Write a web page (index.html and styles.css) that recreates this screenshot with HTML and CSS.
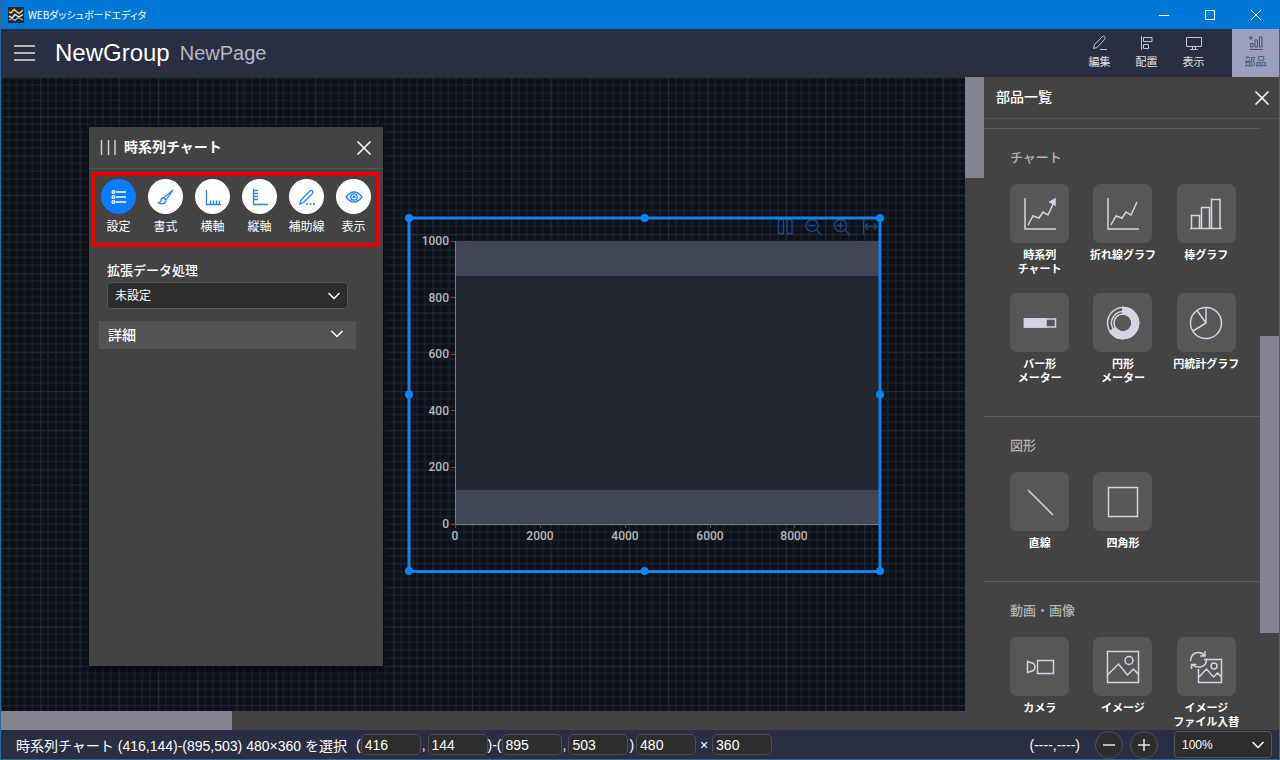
FILE: index.html
```html
<!DOCTYPE html>
<html lang="ja">
<head>
<meta charset="utf-8">
<title>WEBダッシュボードエディタ</title>
<link rel="stylesheet" href="styles.css">
</head>
<body>
<div class="app">
  <div class="titlebar">
    <svg class="app-icon" width="16" height="16" viewBox="0 0 16 16"><rect width="16" height="16" fill="#2b2b2b"/><path d="M1 5 3 6 6 2.500 11 6.500 15 3" fill="none" stroke="#f3d78a" stroke-width="1.400"/><path d="M1 9 4 11 7 7.500 11 10 15 7.500" fill="none" stroke="#f5f0dc" stroke-width="1.400"/><path d="M1 13 4 11.500 7 13.500 10 10.500 15 13" fill="none" stroke="#8ec6d8" stroke-width="1.200"/></svg>
    <span class="titlebar-text">WEBダッシュボードエディタ</span>
    <div class="win-buttons">
      <button class="win-button" aria-label="最小化"><svg width="12" height="12"><path d="M1 6.500h10"/></svg></button>
      <button class="win-button" aria-label="最大化"><svg width="12" height="12"><path d="M1.500 1.500h9v9h-9z"/></svg></button>
      <button class="win-button" aria-label="閉じる"><svg width="12" height="12"><path d="M1 1l10 10M11 1L1 11"/></svg></button>
    </div>
  </div>

  <header class="header">
    <button class="menu-button" aria-label="メニュー"><svg width="22" height="18"><path d="M0 2h21M0 9h21M0 16h21" stroke="#b4b4bc" stroke-width="2"/></svg></button>
    <h1 class="group-name">NewGroup</h1>
    <span class="page-name">NewPage</span>
    <nav class="tools">
      <button class="tool"><svg width="16" height="16" viewBox="0 0 16 16"><path d="M1.500 13.500 2.500 9.500 10.500 1.500Q11.500.700 12.700 1.700 13.800 2.800 13 3.800L5 12.500z M8 14.500h7"/></svg>編集</button>
      <button class="tool"><svg width="16" height="16" viewBox="0 0 16 16"><path d="M2.500 1v14M4.500 2.500h8.500v4H4.500zM4.500 9.500h5v4h-5z"/></svg>配置</button>
      <button class="tool"><svg width="16" height="16" viewBox="0 0 16 16"><path d="M.500 2.500h15v9H.500zM4 14.500h8M6.500 11.500v3M9.500 11.500v3"/></svg>表示</button>
      <button class="tool tool-active"><svg width="16" height="16" viewBox="0 0 16 16"><path d="M1 3h4M3 1v4M2.500 8.500h2.500v3.500H2.500zM7 5h2.500v7H7zM11.500 2H14v10h-2.500zM2 14.500h13"/></svg>部品</button>
    </nav>
  </header>

  <div class="workspace">
    <main class="stage">
      <div class="canvas">
        <svg class="grid" width="100%" height="100%">
          <defs><pattern id="grid" width="40" height="40" patternUnits="userSpaceOnUse" patternTransform="scale(0.981)">
            <path d="M8 0v40M16 0v40M24 0v40M32 0v40M0 8h40M0 16h40M0 24h40M0 32h40" stroke="#1d212a" stroke-width="1.300"/>
            <path d="M0 0v40M0 0h40" stroke="#262a32" stroke-width="2.400"/>
          </pattern></defs>
          <rect width="100%" height="100%" fill="url(#grid)"/>
        </svg>

        <svg class="chart" width="480" height="362" viewBox="404 213 480 362">
          <rect x="455" y="241" width="425" height="283" fill="#23272f"/>
          <rect x="455" y="241" width="425" height="35" fill="#404654"/>
          <rect x="455" y="490" width="425" height="34" fill="#404654"/>
          <path d="M455.500 241v283.500H880" class="axis"/>
          <path d="M451 241.500h4M451 297.500h4M451 354.500h4M451 410.500h4M451 467.500h4M451 524.500h4M455.500 524v4M540.500 524v4M625.500 524v4M710.500 524v4M794.500 524v4" class="tick"/>
          <g class="scale-y"><text x="449" y="245">1000</text><text x="449" y="302">800</text><text x="449" y="358">600</text><text x="449" y="415">400</text><text x="449" y="471">200</text><text x="449" y="528">0</text></g>
          <g class="scale-x"><text x="455" y="540">0</text><text x="540" y="540">2000</text><text x="625" y="540">4000</text><text x="710" y="540">6000</text><text x="794" y="540">8000</text></g>
          <g class="chart-tools">
            <path d="M778.500 219.500h5v14h-5zM787 219.500h5v14h-5z"/>
            <circle cx="812" cy="225.500" r="6"/><path d="M808.500 225.500h7M816.500 230l5 5"/>
            <circle cx="840.500" cy="225.500" r="6"/><path d="M837 225.500h7M840.500 222v7M845 230l5 5"/>
            <path d="M863.500 219v15M865 226.500h12M868 223.500l-3 3 3 3M874 223.500l3 3-3 3"/>
          </g>
          <rect x="409" y="218" width="471" height="353.500" class="frame"/>
          <g fill="#0a84ff"><circle cx="409" cy="218" r="4"/><circle cx="644.500" cy="218" r="4"/><circle cx="880" cy="218" r="4"/><circle cx="409" cy="394.500" r="4"/><circle cx="880" cy="394.500" r="4"/><circle cx="409" cy="571" r="4"/><circle cx="644.500" cy="571" r="4"/><circle cx="880" cy="571" r="4"/></g>
        </svg>

        <section class="dialog">
          <div class="dialog-head">
            <svg width="16" height="16"><path d="M1.500 0v15M8.500 0v15M15 0v15" stroke="#d0d0d0" stroke-width="1.500"/></svg>
            <h2 class="dialog-title">時系列チャート</h2>
            <button class="close" aria-label="閉じる"><svg width="14" height="14"><path d="M.500 .500l13 13M13.500 .500l-13 13"/></svg></button>
          </div>
          <nav class="tabs">
            <button class="tab tab-active"><span class="disc"><svg width="18" height="18" viewBox="0 0 18 18"><circle cx="3.500" cy="4" r="1.400"/><circle cx="3.500" cy="9" r="1.400"/><circle cx="3.500" cy="14" r="1.400"/><path d="M6 4h10M6 9h10M6 14h10"/></svg></span>設定</button>
            <button class="tab"><span class="disc"><svg width="18" height="18" viewBox="0 0 18 18"><path d="M16 2 7 9.500 9 12zM7 9.500Q4 10 4 12.500 3.500 14.500 1.500 15 6 17 8 14.500 9 13.500 9 12"/></svg></span>書式</button>
            <button class="tab"><span class="disc"><svg width="18" height="18" viewBox="0 0 18 18"><path d="M2.500 2v14.500H17M6.500 16v-3.500M9.500 16v-3.500M12.500 16v-3.500M15.500 16v-3.500"/></svg></span>横軸</button>
            <button class="tab"><span class="disc"><svg width="18" height="18" viewBox="0 0 18 18"><path d="M2.500 1v15.500H17M2.500 2.500H7M2.500 5.500H7M2.500 8.500H7M2.500 11.500H7"/></svg></span>縦軸</button>
            <button class="tab"><span class="disc"><svg width="18" height="18" viewBox="0 0 18 18"><path d="M2 16 3 12 12 3Q13.300 2 14.500 3 15.600 4.300 14.500 5.500L6 14z"/><path d="M8 16h9" stroke-dasharray="2 1.500"/></svg></span>補助線</button>
            <button class="tab"><span class="disc"><svg width="18" height="18" viewBox="0 0 18 18"><path d="M1 9Q9-1 17 9 9 19 1 9z"/><circle cx="9" cy="9" r="3.200"/><circle cx="9" cy="9" r=".800"/></svg></span>表示</button>
          </nav>
          <div class="dialog-body">
            <label class="field-label" for="process">拡張データ処理</label>
            <div class="select-box process-box">
              <select id="process"><option>未設定</option></select>
              <svg class="chevron" width="14" height="10"><path d="M1.500 2 7 7.500 12.500 2"/></svg>
            </div>
            <button class="details">詳細<svg class="chevron-inline" width="14" height="10"><path d="M1.500 2 7 7.500 12.500 2"/></svg></button>
          </div>
        </section>
      </div>
      <div class="scroll-v"><div class="thumb-v"></div></div>
      <div class="scroll-h"><div class="thumb-h"></div></div>
    </main>

    <aside class="parts">
      <div class="parts-head">
        <h2 class="parts-title">部品一覧</h2>
        <button class="close" aria-label="閉じる"><svg width="14" height="14"><path d="M.500 .500l13 13M13.500 .500l-13 13"/></svg></button>
      </div>
      <div class="parts-scroll">
        <div class="parts-list">
          <section class="group">
            <h3 class="group-title">チャート</h3>
            <div class="group-grid">
              <button class="part"><span class="tile"><svg width="34" height="34" viewBox="0 0 34 34"><path d="M2 1v31h31M5 28l5-9 6 2 4-6 5 3 6-13"/><path d="M27 5l5-3v6z" fill="#d6d4e2"/></svg></span>時系列<br>チャート</button>
              <button class="part"><span class="tile"><svg width="34" height="34" viewBox="0 0 34 34"><path d="M2 1v31h31M5 28l5-9 6 2 4-6 5 3 6-13"/></svg></span>折れ線グラフ</button>
              <button class="part"><span class="tile"><svg width="34" height="34" viewBox="0 0 34 34"><path d="M1 31.500h32M2.500 31V18.500h8V31M12.500 31V10.500h8V31M22.500 31V2.500h8.500V31"/></svg></span>棒グラフ</button>
              <button class="part"><span class="tile"><svg width="34" height="34" viewBox="0 0 34 34"><path d="M1.500 13h31v8h-31z"/><path d="M1.500 13H23v8H1.500z" fill="#d6d4e2"/></svg></span>バー形<br>メーター</button>
              <button class="part"><span class="tile"><svg width="34" height="34" viewBox="0 0 34 34"><circle cx="17" cy="17" r="15.500"/><circle cx="17" cy="17" r="9"/><path d="M17 1.500A15.500 15.500 0 1 1 4 25.500L7.500 23.500A11.500 11.500 0 0 1 17 5.500z"/><path d="M17 1.500A15.500 15.500 0 1 1 4 25.500L9.500 22A9 9 0 1 0 17 8z" fill="#d6d4e2"/></svg></span>円形<br>メーター</button>
              <button class="part"><span class="tile"><svg width="34" height="34" viewBox="0 0 34 34"><circle cx="17" cy="17" r="15.500"/><path d="M17 1.500V17L4 25M17 17 8 4.500"/></svg></span>円統計グラフ</button>
            </div>
          </section>
          <section class="group">
            <h3 class="group-title">図形</h3>
            <div class="group-grid">
              <button class="part"><span class="tile"><svg width="34" height="34" viewBox="0 0 34 34"><path d="M5 5l25 25"/></svg></span>直線</button>
              <button class="part"><span class="tile"><svg width="34" height="34" viewBox="0 0 34 34"><path d="M2.500 2.500h29v29h-29z"/></svg></span>四角形</button>
            </div>
          </section>
          <section class="group">
            <h3 class="group-title">動画・画像</h3>
            <div class="group-grid">
              <button class="part"><span class="tile"><svg width="34" height="34" viewBox="0 0 34 34"><path d="M14.500 10.500h16v13h-16zM4.500 11.500l6 2q3 3.500 0 7l-6 2z"/></svg></span>カメラ</button>
              <button class="part"><span class="tile"><svg width="34" height="34" viewBox="0 0 34 34"><path d="M1.500 1.500h31v31h-31zM2 24.500 12.500 14l9 11 6-6 5 5.500"/><circle cx="23" cy="10.500" r="4"/></svg></span>イメージ</button>
              <button class="part"><span class="tile"><svg width="34" height="34" viewBox="0 0 34 34"><path d="M9.500 19v13.500h23v-23H15M10 27l7.500-8 7 8 4-4 4 4M1.500 11Q2 3 9 2.500q4-.200 6.500 3M16 1v5h-5M2.500 19v-4.500h5M17.500 8.500q.500 7-6 8.500-5 .500-8-2"/><circle cx="25" cy="16" r="3"/></svg></span>イメージ<br>ファイル入替</button>
            </div>
          </section>
        </div>
        <div class="parts-track"><div class="parts-thumb"></div></div>
      </div>
    </aside>
  </div>

  <footer class="status">
    <span class="status-text">時系列チャート (416,144)-(895,503) 480×360 を選択</span>
    <span>(</span><input class="num" value="416" aria-label="左"><span class="sep">,</span><input class="num" value="144" aria-label="上"><span>)-(</span><input class="num" value="895" aria-label="右"><span class="sep">,</span><input class="num" value="503" aria-label="下"><span class="sep">)</span><input class="num" value="480" aria-label="幅"><span class="times">×</span><input class="num" value="360" aria-label="高さ">
    <span class="pointer">(----,----)</span>
    <button class="zoom" aria-label="縮小"><svg width="12" height="12"><path d="M0 6h12"/></svg></button>
    <button class="zoom" aria-label="拡大"><svg width="12" height="12"><path d="M0 6h12M6 0v12"/></svg></button>
    <div class="select-box zoom-box">
      <select aria-label="表示倍率"><option>100%</option></select>
      <svg class="chevron" width="14" height="10"><path d="M1.500 2 7 7.500 12.500 2"/></svg>
    </div>
  </footer>
</div>
</body>
</html>
```
FILE: styles.css
```css
* { box-sizing: border-box; }

body {
  margin: 0;
  color: #fff;
  background: #2a2e42;
  font-family: "Liberation Sans", "Noto Sans CJK JP", sans-serif;
}

button, input, select {
  margin: 0;
  padding: 0;
  border: 0;
  color: inherit;
  background: none;
  font-family: inherit;
  font-size: inherit;
}

h1, h2, h3 { margin: 0; }

svg {
  display: block;
  flex: none;
  fill: none;
}

.app {
  display: flex;
  flex-direction: column;
  height: 100vh;
  border: 1px solid #2f6796;
  border-top: 0;
}

/* Title bar */
.titlebar {
  display: flex;
  align-items: center;
  flex: none;
  height: 29px;
  padding-left: 7px;
  background: #0078d7;
}
.titlebar-text {
  padding-left: 4px;
  font-family: "Noto Sans CJK JP", sans-serif;
  font-size: 10px;
  font-feature-settings: "palt";
}
.win-buttons { display: flex; margin-left: auto; }
.win-button {
  display: grid;
  place-items: center;
  width: 46px;
  height: 29px;
  stroke: #fff;
}

/* Header */
.header {
  display: flex;
  align-items: center;
  flex: none;
  height: 48px;
  padding-left: 13px;
  background: #2a2e42;
}
.group-name { padding-left: 19px; font-size: 24px; font-weight: 400; }
.page-name { padding-left: 10px; color: #b8b8c0; font-size: 20px; }
.tools { display: flex; height: 100%; margin-left: auto; }
.tool {
  display: flex;
  flex-direction: column;
  align-items: center;
  gap: 2px;
  width: 47px;
  padding-top: 6px;
  color: #e0e0e4;
  font-size: 11px;
  line-height: 18px;
  stroke: #c4c4cc;
}
.tool-active {
  margin-left: 15px;
  color: #4a4e66;
  background: #9aa0be;
  stroke: #4a4e66;
}

/* Workspace */
.workspace { display: flex; flex: 1; min-height: 0; }
.stage {
  display: grid;
  flex: 1;
  grid-template: 1fr 19px / 1fr 19px;
  min-width: 0;
  background: #434343;
}
.canvas {
  position: relative;
  overflow: hidden;
  background: #0d1119;
}
.scroll-v, .scroll-h, .parts-track { background: #434343; }
.thumb-v { height: 101px; background: #848590; }
.thumb-h { width: 231px; height: 19px; background: #848590; }

/* Chart */
.chart { position: absolute; left: 403px; top: 136px; }
.axis { stroke: #7a7e88; }
.tick { stroke: #50545c; }
.frame { stroke: #1482e8; stroke-width: 3px; }
.chart-tools { stroke: #194b84; stroke-width: 1.3px; }
.chart text {
  fill: #b8b8b8;
  font-family: Roboto, sans-serif;
  font-size: 12px;
  font-weight: 500;
}
.scale-y { text-anchor: end; }
.scale-x { text-anchor: middle; }

/* Settings dialog */
.dialog {
  position: absolute;
  left: 88px;
  top: 50px;
  width: 294px;
  height: 539px;
  background: #434343;
  box-shadow: 0 2px 8px #000;
}
.dialog-head {
  display: flex;
  align-items: center;
  height: 42px;
  padding: 0 11px;
  border-bottom: 1px solid #555;
}
.dialog-title { padding: 0 0 4px 8px; font-size: 14px; }
.close {
  display: grid;
  place-items: center;
  width: 16px;
  height: 16px;
  margin-left: auto;
  stroke: #fff;
  stroke-width: 1.5px;
}
.tabs {
  display: grid;
  grid-template-columns: repeat(6, 1fr);
  height: 69px;
  margin: 6px 6px 0;
  outline: 4px solid #ea0000;
  outline-offset: -1px;
}
.tab {
  display: flex;
  flex-direction: column;
  align-items: center;
  gap: 4px;
  padding-top: 4px;
  font-size: 12px;
  line-height: 18px;
  white-space: nowrap;
}
.disc {
  display: grid;
  place-items: center;
  width: 35px;
  height: 35px;
  border-radius: 50%;
  background: #fff;
  stroke: #1f86ff;
  stroke-width: 1.3px;
}
.tab-active .disc { background: #0a7cff; stroke: #fff; }
.dialog-body { padding: 17px 27px 0 10px; }
.field-label {
  display: block;
  padding-left: 8px;
  font-size: 13px;
  font-weight: 500;
  line-height: 20px;
}
.select-box { position: relative; }
.select-box select {
  width: 100%;
  height: 27px;
  padding: 0 7px;
  border: 1px solid #555;
  border-radius: 4px;
  background: #2d2d2d;
  font-size: 12px;
  appearance: none;
}
.process-box { margin: 1px 8px 12px; }
.chevron {
  position: absolute;
  top: 50%;
  right: 7px;
  margin-top: -5px;
  pointer-events: none;
}
.chevron, .chevron-inline { stroke: #fff; stroke-width: 1.5px; }
.details {
  display: flex;
  align-items: center;
  justify-content: space-between;
  width: 100%;
  height: 28px;
  padding: 0 12px 2px 9px;
  background: #535353;
  font-size: 14px;
  font-weight: 500;
}

/* Parts panel */
.parts {
  display: flex;
  flex-direction: column;
  flex: none;
  width: 295px;
  background: #434343;
}
.parts-head {
  display: flex;
  align-items: center;
  flex: none;
  height: 42px;
  padding: 0 9px 0 12px;
  border-bottom: 1px solid #555;
}
.parts-title { padding-bottom: 3px; font-size: 14px; font-weight: 500; }
.parts-scroll { display: flex; flex: 1; min-height: 0; overflow: hidden; }
.parts-list { flex: 1; padding-top: 9px; }
.parts-track { width: 19px; padding-top: 217px; }
.parts-thumb { height: 297px; background: #848590; }
.group { padding: 20px 12px 31px 14px; border-top: 1px solid #5c5c5c; }
.group-title {
  margin-bottom: 17px;
  padding-left: 12px;
  color: #b4b4b4;
  font-size: 13px;
  font-weight: 500;
  line-height: 18px;
}
.group-grid {
  display: grid;
  grid-template-columns: repeat(3, 1fr);
  row-gap: 17px;
}
.part {
  align-self: start;
  font-size: 11px;
  font-weight: 700;
  line-height: 14px;
  white-space: nowrap;
}
.tile {
  display: grid;
  place-items: center;
  width: 59px;
  height: 59px;
  margin: 0 auto 5px;
  border-radius: 7px;
  background: #575757;
  stroke: #d6d4e2;
  stroke-width: 1.5px;
}

/* Status bar */
.status {
  display: flex;
  align-items: center;
  flex: none;
  height: 29px;
  padding: 0 7px 0 15px;
  font-size: 14px;
  white-space: nowrap;
}
.status-text { margin-right: 9px; }
.num {
  width: 60px;
  height: 21px;
  padding: 0 3px;
  border: 1px solid #505050;
  border-radius: 5px;
  background: #2d2d2d;
}
.sep { padding: 0 2px 0 1px; }
.times { width: 16px; text-align: center; }
.pointer { margin-left: auto; padding-right: 15px; }
.zoom {
  display: grid;
  place-items: center;
  width: 28px;
  height: 28px;
  margin-right: 7px;
  border: 1px solid #505050;
  border-radius: 50%;
  background: #2d2d2d;
  stroke: #e8e8e8;
  stroke-width: 1.5px;
}
.zoom-box { width: 98px; margin-left: 9px; }
```
